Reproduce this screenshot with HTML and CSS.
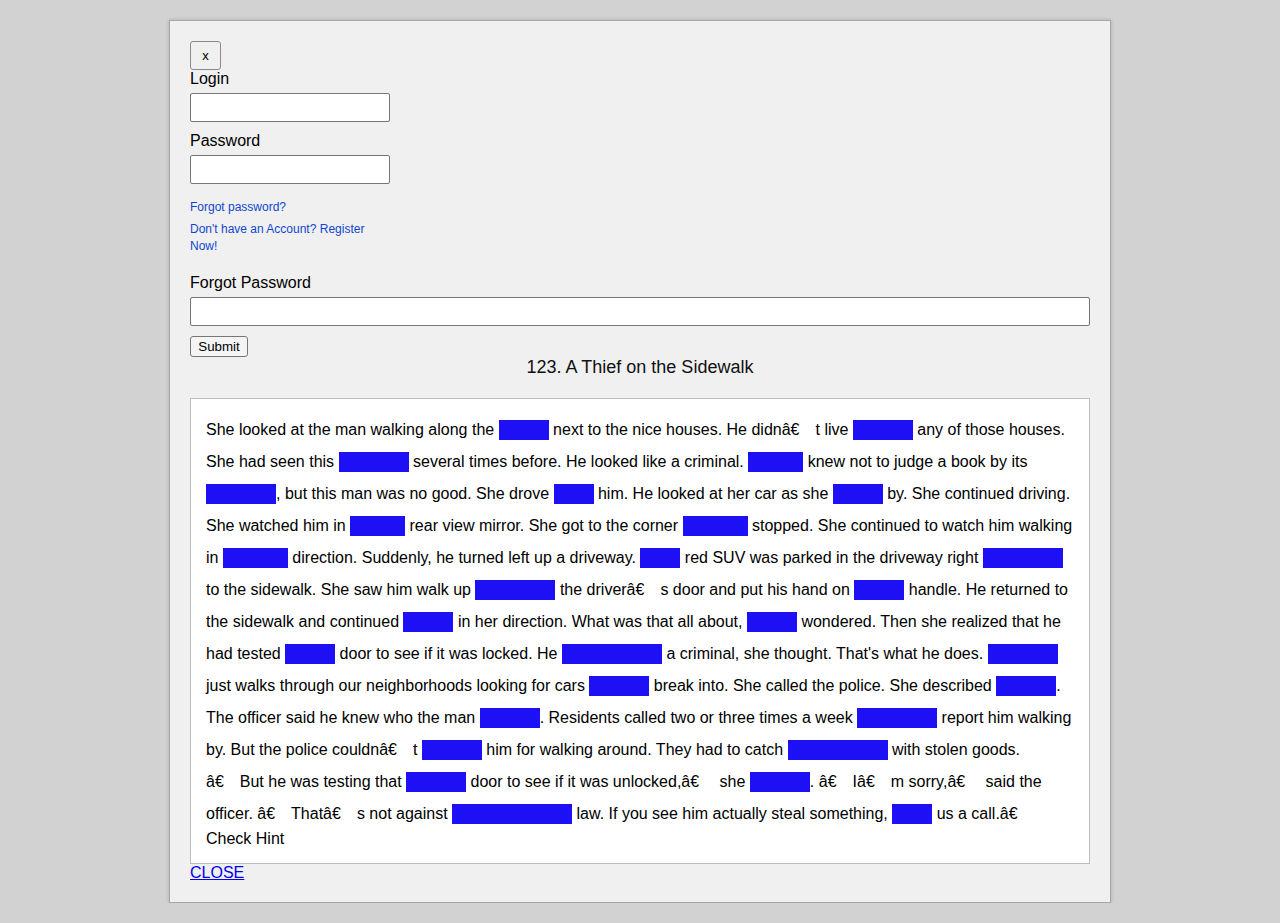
FILE: index.html
```html
<!DOCTYPE html>
<html>
<head>
<meta charset="utf-8">
<title>123. A Thief on the Sidewalk</title>
<link rel="stylesheet" href="styles.css">
</head>
<body>
<div class="dialog">
  <button class="btn-x" type="button">x</button>
  <form class="login">
    <label class="field-label">Login</label>
    <input class="field field-small" type="text">
    <label class="field-label">Password</label>
    <input class="field field-small" type="password">
    <div class="links">
      <a class="small-link" href="#">Forgot password?</a>
      <a class="small-link" href="#">Don't have an Account? Register Now!</a>
    </div>
  </form>
  <form class="forgot">
    <label class="field-label forgot-label">Forgot Password</label>
    <input class="field field-wide" type="text">
    <button class="btn-submit" type="button">Submit</button>
  </form>
  <h2 class="title">123. A Thief on the Sidewalk</h2>
  <div class="story">
    <p class="text">She looked at the man walking along the <span class="blank w50"></span> next to the nice houses. He didn<span class="mj">â€</span>t live <span class="blank w60"></span> any of those houses.<br>
She had seen this <span class="blank w70"></span> several times before. He looked like a criminal. <span class="blank w55"></span> knew not to judge a book by its<br>
<span class="blank w70"></span>, but this man was no good. She drove <span class="blank w40"></span> him. He looked at her car as she <span class="blank w50"></span> by. She continued driving.<br>
She watched him in <span class="blank w55"></span> rear view mirror. She got to the corner <span class="blank w65"></span> stopped. She continued to watch him walking<br>
in <span class="blank w65"></span> direction. Suddenly, he turned left up a driveway. <span class="blank w40"></span> red SUV was parked in the driveway right <span class="blank w80"></span><br>
to the sidewalk. She saw him walk up <span class="blank w80"></span> the driver<span class="mj">â€</span>s door and put his hand on <span class="blank w50"></span> handle. He returned to<br>
the sidewalk and continued <span class="blank w50"></span> in her direction. What was that all about, <span class="blank w50"></span> wondered. Then she realized that he<br>
had tested <span class="blank w50"></span> door to see if it was locked. He <span class="blank w100"></span> a criminal, she thought. That's what he does. <span class="blank w70"></span><br>
just walks through our neighborhoods looking for cars <span class="blank w60"></span> break into. She called the police. She described <span class="blank w60"></span>.<br>
The officer said he knew who the man <span class="blank w60"></span>. Residents called two or three times a week <span class="blank w80"></span> report him walking<br>
by. But the police couldn<span class="mj">â€</span>t <span class="blank w60"></span> him for walking around. They had to catch <span class="blank w100"></span> with stolen goods.<br>
<span class="mj">â€</span>But he was testing that <span class="blank w60"></span> door to see if it was unlocked,<span class="mj">â€</span> she <span class="blank w60"></span>. <span class="mj">â€</span>I<span class="mj">â€</span>m sorry,<span class="mj">â€</span> said the<br>
officer. <span class="mj">â€</span>That<span class="mj">â€</span>s not against <span class="blank w120"></span> law. If you see him actually steal something, <span class="blank w40"></span> us a call.<span class="mj">â€</span></p>
    <div class="hint">Check Hint</div>
  </div>
  <a class="close-link" href="#">CLOSE</a>
</div>
</body>
</html>
```

FILE: styles.css
```css
html, body {
  margin: 0;
  padding: 0;
}

body {
  background: #d2d2d2;
  font-family: "Liberation Sans", Arial, sans-serif;
  font-size: 16px;
  color: #000;
}

.dialog {
  width: 900px;
  margin: 20px auto 0;
  padding: 20px;
  background: #f0f0f0;
  border: 1px solid #a6a6a6;
  box-shadow: 0 0 4px rgba(0, 0, 0, 0.18);
}

.btn-x {
  display: block;
  width: 31px;
  height: 29px;
  padding: 0;
  margin: 0;
  font-family: "Liberation Sans", Arial, sans-serif;
  font-size: 13px;
  color: #000;
  background: #f0f0f0;
  border: 1px solid #8a8a8a;
  border-radius: 3px;
}

.login,
.forgot {
  margin: 0;
}

.field-label {
  display: block;
  line-height: 18px;
  font-size: 16px;
}

.field {
  display: block;
  box-sizing: border-box;
  height: 29px;
  margin: 5px 0 10px;
  padding: 2px 4px;
  background: #fff;
  border: 1px solid #767676;
  border-radius: 2px;
  font-family: "Liberation Sans", Arial, sans-serif;
  font-size: 13px;
}

.field-small {
  width: 200px;
}

.field-wide {
  width: 900px;
}

.links {
  width: 200px;
  margin-top: 15px;
}

.small-link {
  display: block;
  font-size: 12px;
  line-height: 17px;
  color: #1046d0;
  text-decoration: none;
}

.small-link + .small-link {
  margin-top: 5px;
}

.forgot-label {
  margin-top: 19px;
}

.btn-submit {
  display: block;
  box-sizing: border-box;
  width: 58px;
  height: 21px;
  margin: 10px 0 0;
  padding: 0;
  font-family: "Liberation Sans", Arial, sans-serif;
  font-size: 13.33px;
  color: #000;
  background: #f4f4f4;
  border: 1px solid #767676;
  border-radius: 3px;
}

.title {
  margin: 0 0 20px;
  font-size: 18px;
  font-weight: normal;
  text-align: center;
  color: #111;
}

.story {
  background: #fff;
  border: 1px solid #bdbdbd;
  padding: 15px;
}

.text {
  margin: 0 -8px 0 0;
  line-height: 32px;
  color: #000;
}

.blank {
  display: inline-block;
  height: 20px;
  vertical-align: -5px;
  background: #1e10f5;
}

.w40 { width: 40px; }
.w50 { width: 50px; }
.w55 { width: 55px; }
.w60 { width: 60px; }
.w65 { width: 65px; }
.w70 { width: 70px; }
.w80 { width: 80px; }
.w100 { width: 100px; }
.w120 { width: 120px; }

.mj {
  padding-right: 16px;
}

.hint {
  line-height: 18px;
}

.close-link {
  display: inline-block;
  line-height: 18px;
  color: #0000ee;
  text-decoration: underline;
}
```
